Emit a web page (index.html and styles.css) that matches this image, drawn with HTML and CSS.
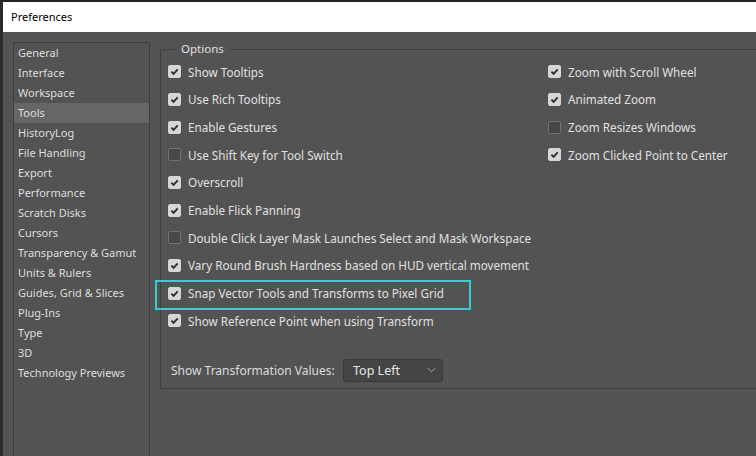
FILE: index.html
```html
<!DOCTYPE html>
<html>
<head>
<meta charset="utf-8">
<link rel="stylesheet" href="styles.css">
</head>
<body>
<div class="window">
  <div class="titlebar">Preferences</div>
  <div class="main">
    <ul class="nav">
      <li>General</li>
      <li>Interface</li>
      <li>Workspace</li>
      <li class="active">Tools</li>
      <li>HistoryLog</li>
      <li>File Handling</li>
      <li>Export</li>
      <li>Performance</li>
      <li>Scratch Disks</li>
      <li>Cursors</li>
      <li>Transparency &amp; Gamut</li>
      <li>Units &amp; Rulers</li>
      <li>Guides, Grid &amp; Slices</li>
      <li>Plug-Ins</li>
      <li>Type</li>
      <li>3D</li>
      <li>Technology Previews</li>
    </ul>
    <fieldset class="options">
      <legend>Options</legend>
      <div class="cols">
        <div class="col col-left">
          <div class="row"><span class="cb on"><svg viewBox="0 0 13 13"><path d="M3.4 6.6 5.6 8.8 9.7 4.4"/></svg></span>Show Tooltips</div>
          <div class="row"><span class="cb on"><svg viewBox="0 0 13 13"><path d="M3.4 6.6 5.6 8.8 9.7 4.4"/></svg></span>Use Rich Tooltips</div>
          <div class="row"><span class="cb on"><svg viewBox="0 0 13 13"><path d="M3.4 6.6 5.6 8.8 9.7 4.4"/></svg></span>Enable Gestures</div>
          <div class="row"><span class="cb"></span>Use Shift Key for Tool Switch</div>
          <div class="row"><span class="cb on"><svg viewBox="0 0 13 13"><path d="M3.4 6.6 5.6 8.8 9.7 4.4"/></svg></span>Overscroll</div>
          <div class="row"><span class="cb on"><svg viewBox="0 0 13 13"><path d="M3.4 6.6 5.6 8.8 9.7 4.4"/></svg></span>Enable Flick Panning</div>
          <div class="row"><span class="cb"></span>Double Click Layer Mask Launches Select and Mask Workspace</div>
          <div class="row"><span class="cb on"><svg viewBox="0 0 13 13"><path d="M3.4 6.6 5.6 8.8 9.7 4.4"/></svg></span>Vary Round Brush Hardness based on HUD vertical movement</div>
          <div class="row highlighted"><span class="cb on"><svg viewBox="0 0 13 13"><path d="M3.4 6.6 5.6 8.8 9.7 4.4"/></svg></span>Snap Vector Tools and Transforms to Pixel Grid<span class="callout"></span></div>
          <div class="row"><span class="cb on"><svg viewBox="0 0 13 13"><path d="M3.4 6.6 5.6 8.8 9.7 4.4"/></svg></span>Show Reference Point when using Transform</div>
        </div>
        <div class="col col-right">
          <div class="row"><span class="cb on"><svg viewBox="0 0 13 13"><path d="M3.4 6.6 5.6 8.8 9.7 4.4"/></svg></span>Zoom with Scroll Wheel</div>
          <div class="row"><span class="cb on"><svg viewBox="0 0 13 13"><path d="M3.4 6.6 5.6 8.8 9.7 4.4"/></svg></span>Animated Zoom</div>
          <div class="row"><span class="cb"></span>Zoom Resizes Windows</div>
          <div class="row"><span class="cb on"><svg viewBox="0 0 13 13"><path d="M3.4 6.6 5.6 8.8 9.7 4.4"/></svg></span>Zoom Clicked Point to Center</div>
        </div>
      </div>
      <div class="transform">
        <span class="label">Show Transformation Values:</span>
        <div class="select">
          <span>Top Left</span>
          <svg viewBox="0 0 10 6"><path d="M1 1 5 5 9 1"/></svg>
        </div>
      </div>
    </fieldset>
  </div>
</div>
</body>
</html>
```

FILE: styles.css
```css
html, body {
  margin: 0;
  padding: 0;
  width: 756px;
  height: 456px;
  overflow: hidden;
  background: #535353;
  font-family: "Noto Sans", "Open Sans", sans-serif;
  font-size: 12px;
}

.window {
  width: 756px;
  height: 456px;
  box-sizing: border-box;
  border-top: 2px solid #222;
  border-left: 3px solid #2a2a2a;
  background: #535353;
  display: flex;
  flex-direction: column;
  overflow: hidden;
}

.titlebar {
  height: 30px;
  line-height: 30px;
  flex: none;
  background: #fff;
  color: #000;
  padding-left: 8px;
  font-size: 11px;
}

.main {
  flex: 1;
  display: flex;
  align-items: flex-start;
  padding: 9px 0 0 10px;
  gap: 10px;
  min-height: 0;
}

.nav {
  list-style: none;
  margin: 1px 0 0 0;
  padding: 0;
  width: 135px;
  height: 440px;
  flex: none;
  border: 1px solid #3e3e3e;
  color: #dedede;
  font-size: 11px;
}

.nav li {
  height: 20px;
  line-height: 20px;
  padding-left: 4px;
  white-space: nowrap;
}

.nav li.active {
  background: #666;
}

.options {
  flex: none;
  width: 640px;
  margin: 0;
  padding: 1px 7px 6px 7px;
  border: 1px solid #3e3e3e;
  color: #e0e0e0;
  font-size: 11.7px;
}

.options legend {
  margin-left: 7px;
  padding: 0 6px;
  line-height: 16px;
  color: #e0e0e0;
  font-size: 11.5px;
}

.cols {
  display: flex;
}

.col-left {
  width: 380px;
  flex: none;
}

.row {
  position: relative;
  height: 27.67px;
  display: flex;
  align-items: center;
  white-space: nowrap;
}

.cb {
  width: 13px;
  height: 13px;
  box-sizing: border-box;
  border-radius: 2px;
  margin-right: 7px;
  flex: none;
  background: #474747;
  border: 1px solid #727272;
  display: flex;
}

.cb.on {
  background: #d6d6d6;
  border-color: #d6d6d6;
}

.cb svg {
  width: 13px;
  height: 13px;
  margin: -1px;
}

.cb svg path {
  fill: none;
  stroke: #2e2e2e;
  stroke-width: 1.9;
}

.callout {
  position: absolute;
  left: -13px;
  top: 1px;
  width: 316px;
  height: 30px;
  box-sizing: border-box;
  border: 2px solid #3accd0;
}

.transform {
  display: flex;
  align-items: center;
  margin-top: 24px;
  padding-left: 3px;
}

.transform .label {
  width: 172px;
  flex: none;
  white-space: nowrap;
  color: #dcdcdc;
  font-size: 12px;
}

.select {
  width: 100px;
  height: 23px;
  box-sizing: border-box;
  background: #444;
  border: 1px solid #3a3a3a;
  border-radius: 3px;
  display: flex;
  align-items: center;
  justify-content: space-between;
  padding: 0 6px 0 9px;
  color: #e6e6e6;
  font-size: 12.5px;
}

.select svg {
  width: 9px;
  height: 6px;
}

.select svg path {
  fill: none;
  stroke: #a8a8a8;
  stroke-width: 1.1;
}
```
